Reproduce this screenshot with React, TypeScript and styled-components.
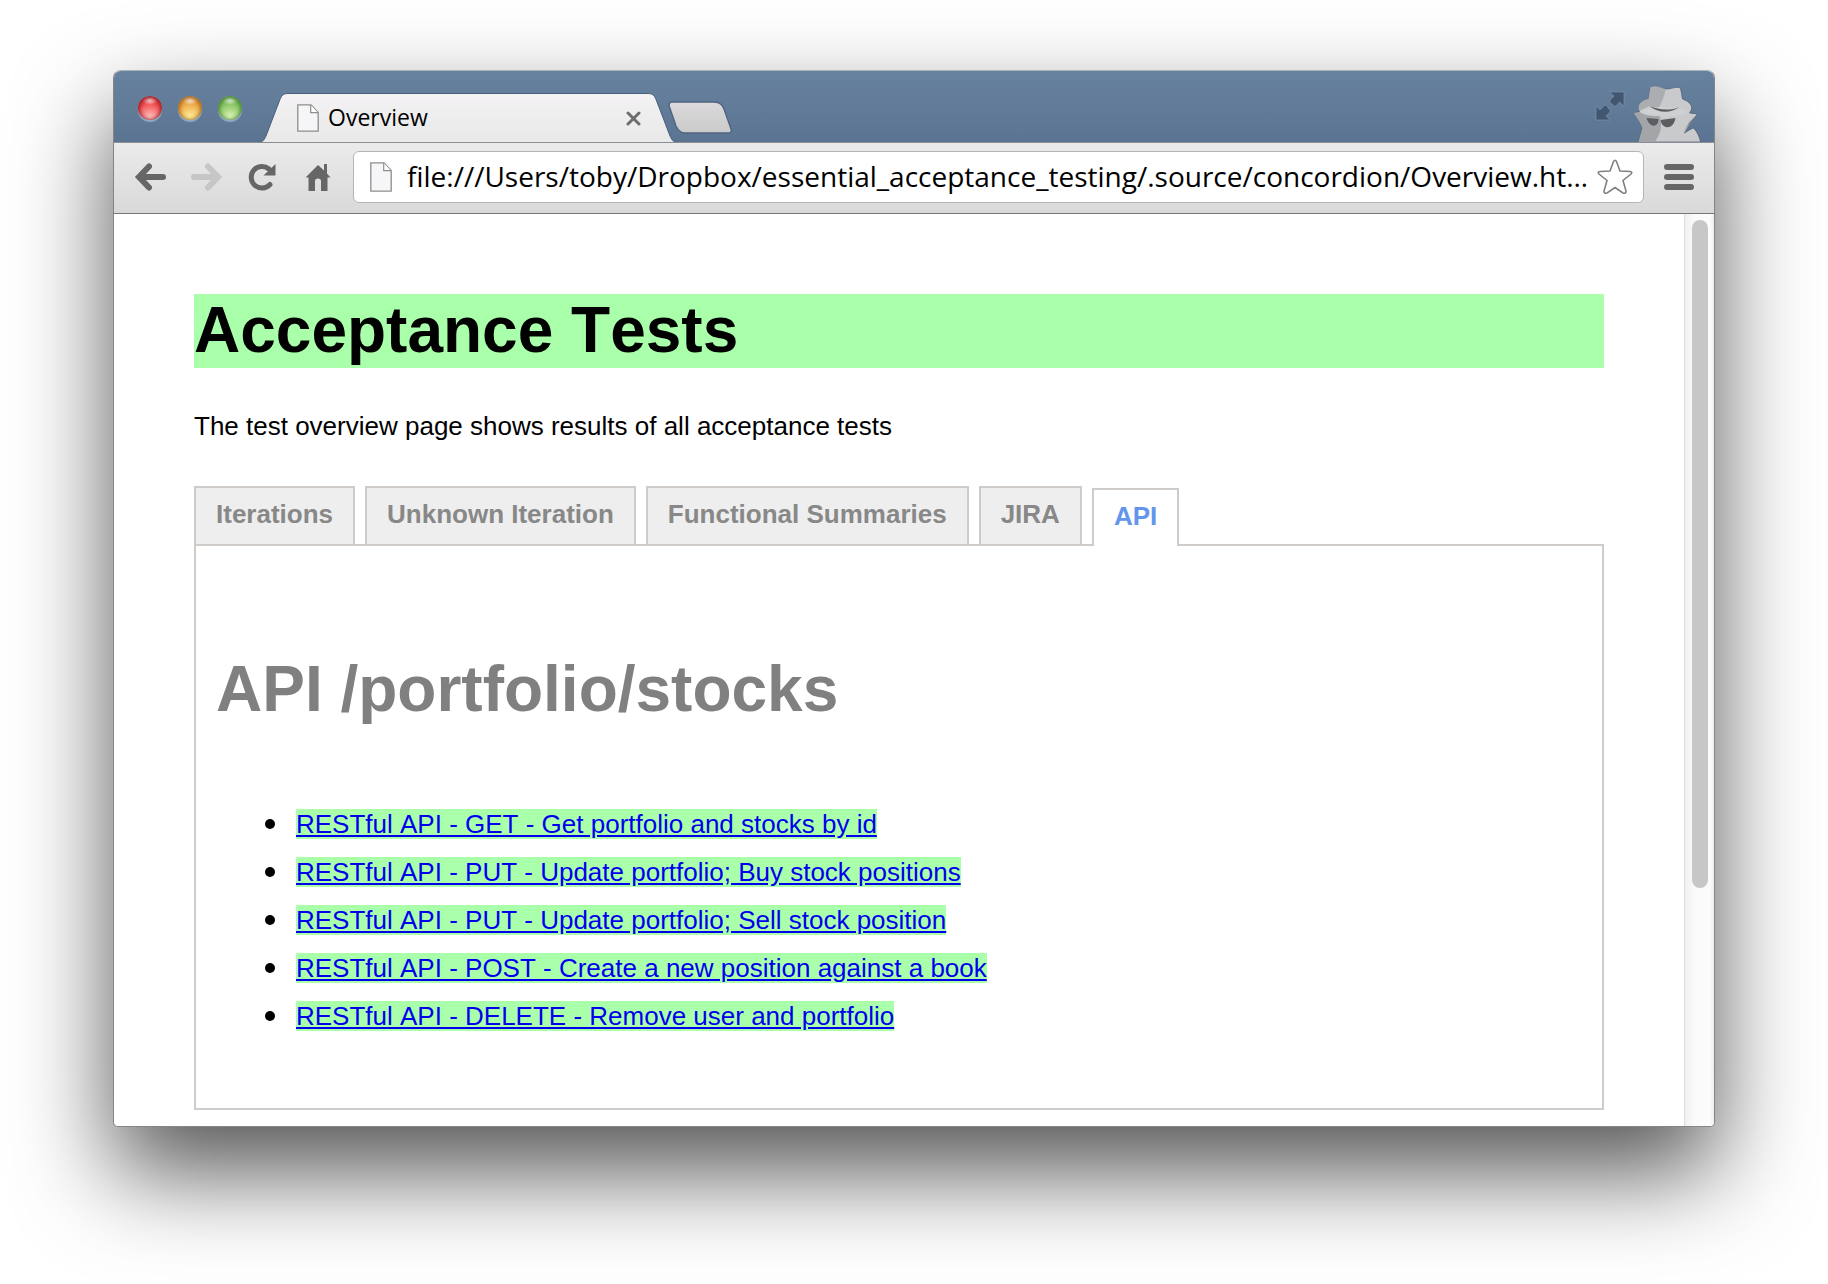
import React from "react";
import styled, { createGlobalStyle } from "styled-components";

const Global = createGlobalStyle`
  *, *::before, *::after { box-sizing: border-box; }
  body { margin: 0; background: #fff; font-family: "Liberation Sans", Arial, sans-serif; font-kerning: none; }
  button { border: 0; padding: 0; background: none; font: inherit; color: inherit; display: flex; }
  svg { display: block; flex: none; }
`;

const Desktop = styled.div`
  padding: 70px 113px 158px;
  overflow: hidden;
`;

const Window = styled.div`
  border: 1px solid #858585;
  border-top-color: #aab4bb;
  border-radius: 8px 8px 5px 5px;
  overflow: hidden;
  background: #fff;
  box-shadow: 0 45px 96px rgba(0, 0, 0, 0.67);
`;

const TitleBar = styled.header`
  display: flex;
  align-items: flex-end;
  height: 71px;
  padding: 0 11px 0 24px;
  background: linear-gradient(#67829f, #5b7491);
`;

const Lights = styled.div`
  display: flex;
  gap: 16px;
  padding-bottom: 22px;
  margin-right: 17px;
`;

const Light = styled.button<{ $rim: string; $mid: string; $low: string }>`
  width: 24px;
  height: 24px;
  border-radius: 50%;
  background:
    radial-gradient(ellipse 8px 5px at 50% 4px, rgba(255, 255, 255, 0.85), rgba(255, 255, 255, 0) 100%),
    radial-gradient(circle at 50% 90%, ${(p) => p.$low} 0, ${(p) => p.$mid} 60%);
  box-shadow: inset 0 1px 4px 1px ${(p) => p.$rim}, 0 2px 1px rgba(200, 220, 240, 0.5);
`;

const Tab = styled.div`
  display: flex;
  height: 49px;
`;

const TabBody = styled.div`
  display: flex;
  align-items: center;
  width: 360px;
  padding: 0 7px 0 9px;
  border-top: 1px solid #4a5f7b;
  background: linear-gradient(#f4f2f4, #e9e9e9);
  font: 23px "Open Sans", "Noto Sans", sans-serif;
  line-height: 30px;
`;

const TabTitle = styled.span`
  flex: 1;
  margin-left: 9px;
  padding-bottom: 2px;
`;

const NewTab = styled.button`
  align-self: flex-end;
  margin: 0 auto 8px -9px;
`;

const TitleTools = styled.div`
  display: flex;
  align-items: flex-end;
  gap: 7px;
`;

const FullScreen = styled.button`
  padding-bottom: 21px;
`;

const Toolbar = styled.nav`
  display: flex;
  align-items: center;
  height: 72px;
  padding: 0 20px 2px;
  border-top: 1px solid #8b8f94;
  border-bottom: 1px solid #777;
  background: linear-gradient(#ebebeb, #d9d9d9);
`;

const NavButtons = styled.div`
  display: flex;
  align-items: center;
  gap: 25px;
  margin-right: 16px;
`;

const NavButton = styled.button`
  width: 32px;
`;

const Omnibox = styled.div`
  display: flex;
  align-items: center;
  flex: 1;
  min-width: 0;
  height: 52px;
  padding: 0 10px 0 16px;
  margin-right: 20px;
  border: 1px solid #b5b5b5;
  border-radius: 6px;
  background: #fff;
`;

const Address = styled.input`
  flex: 1;
  min-width: 0;
  height: 40px;
  margin: 0 6px 2px 15px;
  padding: 0;
  border: 0;
  outline: 0;
  background: none;
  color: #000;
  font: 28px "Open Sans", "Noto Sans", sans-serif;
`;

const Viewport = styled.div`
  display: flex;
`;

const Page = styled.main`
  flex: 1;
  min-width: 0;
  padding: 80px 80px 16px;
  font-size: 26px;
  line-height: 30px;
  color: #000;
`;

const ScrollTrack = styled.div`
  display: flex;
  flex-direction: column;
  width: 30px;
  padding: 6px 6px 0 7px;
  border-left: 1px solid #ddd;
  background: linear-gradient(90deg, #f0f0f0, #fafafa 30%, #fcfcfc 85%, #eee);
`;

const ScrollThumb = styled.div`
  flex: 668;
  border-radius: 8px;
  background: #c7c7c7;
`;

const ScrollRest = styled.div`
  flex: 238;
`;

const Title = styled.h1`
  margin: 0;
  padding-bottom: 2px;
  background: #afa;
  font-size: 64px;
  line-height: 72px;
`;

const Intro = styled.p`
  margin: 43px 0 45px;
`;

const Tabs = styled.div`
  display: flex;
  align-items: flex-end;
  gap: 10px;
  margin-bottom: -2px;
`;

const SectionTab = styled.button<{ $active?: boolean }>`
  position: relative;
  height: ${(p) => (p.$active ? 58 : 60)}px;
  padding: 11px 20px 0;
  border: 2px solid #cfcbc8;
  ${(p) => p.$active && "border-bottom: 0;"}
  background: ${(p) => (p.$active ? "#fff" : "#eee")};
  color: ${(p) => (p.$active ? "#6495ed" : "#888")};
  font-weight: bold;
`;

const Panel = styled.section`
  border: 2px solid #cfcbc8;
  padding: 106px 20px 68px;
`;

const PanelTitle = styled.h2`
  margin: 0 0 74px;
  color: #808080;
  font-size: 64px;
  line-height: 74px;
`;

const Results = styled.ul`
  margin: 0;
  padding-left: 49px;
  list-style: none;
`;

const Result = styled.li`
  display: flex;
  align-items: center;
  gap: 21px;
  height: 48px;

  &::before {
    content: "";
    width: 10px;
    height: 10px;
    border-radius: 50%;
    background: #000;
  }
`;

const ResultLink = styled.a`
  background: #afa;
  color: #00e;
  text-decoration: underline;
`;

const DocIcon = ({ height }: { height: number }) => (
  <svg width="22" height={height} viewBox={`0 0 22 ${height}`}>
    <path d={`M.8.8H14L21.2 8.5V${height - 0.8}H.8Z`} fill="#f6f6f8" stroke="#8d8d8d" strokeWidth="1.3" />
    <path d="M13.7 1V8.7H21" fill="#fff" stroke="#8d8d8d" strokeWidth="1.2" />
  </svg>
);

const ArrowIcon = ({ right, color }: { right?: boolean; color: string }) => (
  <svg width="32" height="28" viewBox="0 0 32 28">
    <path
      d={right ? "M3 14H26M17 3.5L27 14L17 24.5" : "M29 14H6M15 3.5L5 14L15 24.5"}
      fill="none"
      stroke={color}
      strokeWidth="6"
      strokeLinecap="round"
      strokeLinejoin="miter"
    />
  </svg>
);

const links = [
  "RESTful API - GET - Get portfolio and stocks by id",
  "RESTful API - PUT - Update portfolio; Buy stock positions",
  "RESTful API - PUT - Update portfolio; Sell stock position",
  "RESTful API - POST - Create a new position against a book",
  "RESTful API - DELETE - Remove user and portfolio",
];

const sections = ["Iterations", "Unknown Iteration", "Functional Summaries", "JIRA", "API"];

export default function App() {
  return (
    <Desktop>
      <Global />
      <Window>
        <TitleBar>
          <Lights>
            <Light aria-label="Close window" $rim="#8d1420" $mid="#f04a4c" $low="#ffc6c4" />
            <Light aria-label="Minimize window" $rim="#9a5d12" $mid="#eda545" $low="#fff3a0" />
            <Light aria-label="Zoom window" $rim="#3d7a2c" $mid="#82c25e" $low="#e2f6bd" />
          </Lights>
          <Tab>
            <svg width="29" height="49" viewBox="0 0 29 49">
              <defs>
                <linearGradient id="tabFill" x2="0" y2="1">
                  <stop stopColor="#f4f2f4" />
                  <stop offset="1" stopColor="#e9e9e9" />
                </linearGradient>
              </defs>
              <path d="M0 49C4 49 5 47 7 43L20 9C22 3 24 .5 29 .5V49Z" fill="url(#tabFill)" />
              <path d="M0 49C4 49 5 47 7 43L20 9C22 3 24 .5 29 .5" fill="none" stroke="#4a5f7b" />
            </svg>
            <TabBody>
              <DocIcon height={28} />
              <TabTitle>Overview</TabTitle>
              <button aria-label="Close tab">
                <svg width="15" height="15" viewBox="0 0 15 15">
                  <path d="M2 2L13 13M13 2L2 13" stroke="#6e6e6e" strokeWidth="3" strokeLinecap="round" />
                </svg>
              </button>
            </TabBody>
            <svg width="29" height="49" viewBox="0 0 29 49">
              <path d="M29 49C25 49 24 47 22 43L9 9C7 3 5 .5 0 .5V49Z" fill="url(#tabFill)" />
              <path d="M29 49C25 49 24 47 22 43L9 9C7 3 5 .5 0 .5" fill="none" stroke="#4a5f7b" />
            </svg>
          </Tab>
          <NewTab aria-label="New tab">
            <svg width="64" height="33" viewBox="0 0 64 33">
              <defs>
                <linearGradient id="newTab" x2="0" y2="1">
                  <stop stopColor="#dcdadc" />
                  <stop offset="1" stopColor="#cacaca" />
                </linearGradient>
              </defs>
              <path
                d="M4 1H46C52 1 54 4 56 8L63 28C64 31 62 32 60 32H17C12 32 10 29 8 25L1.500 6C.5 3 1.500 1 4 1Z"
                fill="url(#newTab)"
                stroke="#4f647f"
                strokeWidth="1.400"
              />
            </svg>
          </NewTab>
          <TitleTools>
            <FullScreen aria-label="Full screen">
              <svg width="30" height="30" viewBox="0 0 30 30">
                <g fill="#42566f" stroke="#8299b2" strokeWidth=".6">
                  <path d="M14 1H29V15L24.500 11L22 14C20 16 18 15 17.500 13C15 13 14 10 16 8L19 5Z" />
                  <path d="M1 15V29H15L11 25L14 22C16 20 15 18 13 17.500C13 15 10 13 8 16L5 19Z" />
                </g>
              </svg>
            </FullScreen>
            <svg width="71" height="57" viewBox="0 0 70 57">
              <path
                d="M18 2C24 0 28 4 34 4C40 4 43 1 48 3L50 14C58 17 62 22 57 28L65 29C60 35 56 42 52 48C55 46 58 44 61 43C65 47 67 52 68 57H6L10 43C8 38 5 33 1 28L7 27C4 20 9 15 16 14Z"
                fill="#c9cacc"
                stroke="#495c76"
                strokeWidth=".7"
              />
              <path d="M18 2C24 0 28 3 33 4C32 12 29 18 26 23L17 21L7 26C4 20 9 15 16 14Z" fill="#abadb0" />
              <path d="M1 28L7 27C12 31 20 31 27 31C31 42 27 51 22 57H6L10 43C8 38 5 33 1 28Z" fill="#a4a5a8" />
              <path d="M7 26C20 21 45 21 57 27C48 33 17 33 7 26Z" fill="#cfd0d2" />
              <path d="M17 21C26 25 38 26 47 22C38 29 25 28 17 21Z" fill="#5b5d61" />
              <path d="M14 33L26 34C26 43 17 43 14 33ZM28 35L43 33C41 45 30 45 28 35Z" fill="#5b5d61" />
              <path d="M64 30L51 47L57 37Z" fill="#77797d" />
            </svg>
          </TitleTools>
        </TitleBar>

        <Toolbar>
          <NavButtons>
            <NavButton aria-label="Back"><ArrowIcon color="#666" /></NavButton>
            <NavButton aria-label="Forward"><ArrowIcon right color="#c6c6c6" /></NavButton>
            <NavButton aria-label="Reload">
              <svg width="30" height="28" viewBox="0 0 30 28">
                <path d="M22 21.500A10.800 10.800 0 1 1 21 6" fill="none" stroke="#666" strokeWidth="5" strokeLinecap="round" />
                <path d="M27.500 1V12.500H15.500Z" fill="#666" />
              </svg>
            </NavButton>
            <NavButton aria-label="Home">
              <svg width="26" height="28" viewBox="0 0 26 28">
                <path d="M13 2L19 7.500V1H22V10.500L25.500 14.500H22.500V28H16V18Q16 15.500 13 15.500Q10 15.500 10 18V28H3.500V14.500H.5Z" fill="#666" />
              </svg>
            </NavButton>
          </NavButtons>
          <Omnibox>
            <DocIcon height={30} />
            <Address
              aria-label="Address"
              defaultValue="file:///Users/toby/Dropbox/essential_acceptance_testing/.source/concordion/Overview.ht…"
            />
            <button aria-label="Bookmark">
              <svg width="36" height="36" viewBox="0 0 36 36">
                <path
                  d="M16.500 2.500Q18 0 19.500 2.500L23 12L33 12.500Q36 13 34 15L26 21.500L29 32Q29 35 26 34L18 28.500L10 34Q7 35 7 32L10 21.500L2 15Q0 13 3 12.500L13 12Z"
                  fill="#fff"
                  stroke="#808080"
                  strokeWidth="1.600"
                />
              </svg>
            </button>
          </Omnibox>
          <button aria-label="Menu">
            <svg width="30" height="26" viewBox="0 0 30 26">
              <path d="M3 3H27M3 13H27M3 23H27" stroke="#666" strokeWidth="6" strokeLinecap="round" />
            </svg>
          </button>
        </Toolbar>

        <Viewport>
          <Page>
            <Title>Acceptance Tests</Title>
            <Intro>The test overview page shows results of all acceptance tests</Intro>
            <Tabs>
              {sections.map((name) => (
                <SectionTab key={name} $active={name === "API"}>{name}</SectionTab>
              ))}
            </Tabs>
            <Panel>
              <PanelTitle>API /portfolio/stocks</PanelTitle>
              <Results>
                {links.map((text) => (
                  <Result key={text}><ResultLink href="#">{text}</ResultLink></Result>
                ))}
              </Results>
            </Panel>
          </Page>
          <ScrollTrack>
            <ScrollThumb />
            <ScrollRest />
          </ScrollTrack>
        </Viewport>
      </Window>
    </Desktop>
  );
}
